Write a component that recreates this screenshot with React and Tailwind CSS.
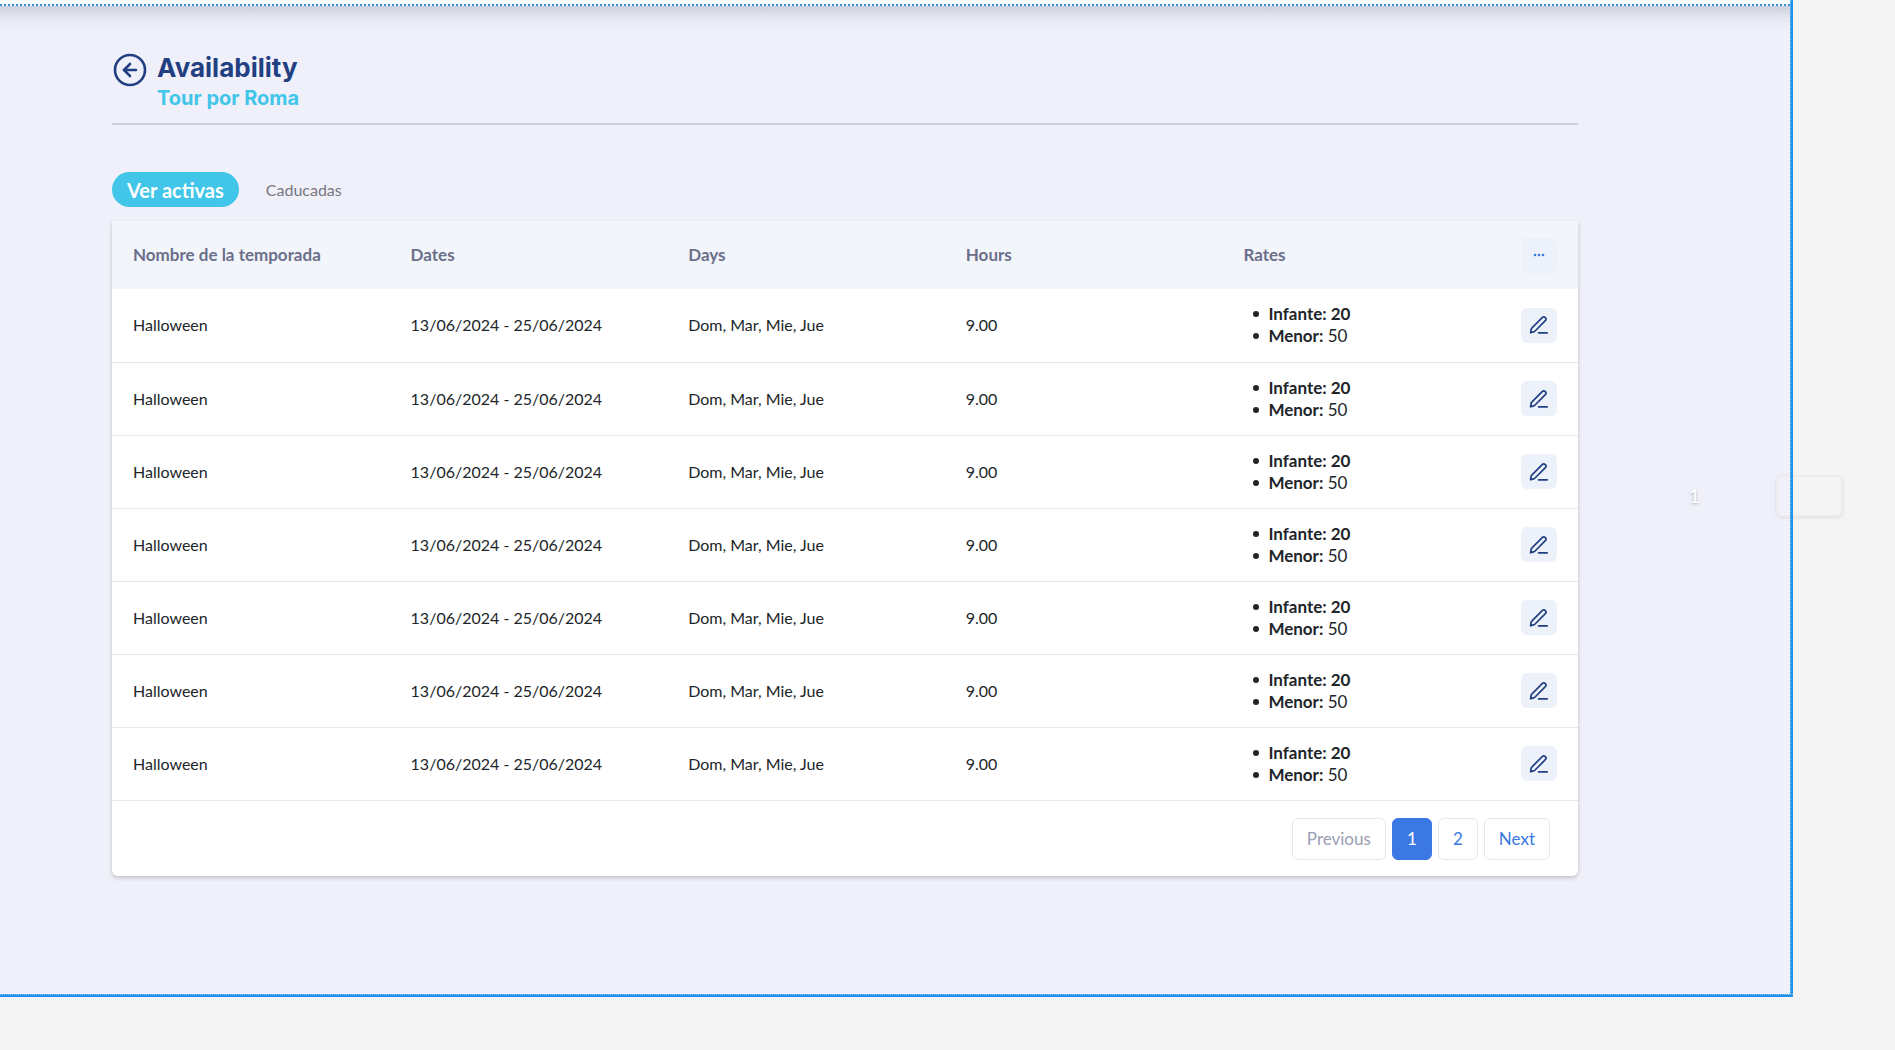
import React, { useState } from 'react';
import { CircleArrowLeft } from 'lucide-react';

const seasons = Array.from({ length: 7 }, (_, index) => ({
    id: index + 1,
    name: 'Halloween',
    dates: '13/06/2024 - 25/06/2024',
    days: 'Dom, Mar, Mie, Jue',
    hours: '9.00',
    infant: 20,
    minor: 50,
}));

const columns = ['Nombre de la temporada', 'Dates', 'Days', 'Hours', 'Rates'];

const PenIcon = () => (
    <svg width="20" height="20" viewBox="0 0 20 20" fill="none" stroke="currentColor" strokeWidth="1.7" strokeLinecap="round" strokeLinejoin="round" aria-hidden="true">
        <path d="M1.6 17.8l.5-3.3a3 3 0 0 1 .9-1.7L13.2 2.6a2.1 2.1 0 0 1 3.1 3.1L6.1 16a3 3 0 0 1-1.6.9z" />
        <path d="M9.6 17.8h8.6" />
    </svg>
);

const pageButton = 'h-[42px] rounded-md border px-[14px] text-[17px]';
const bullet = "flex items-center gap-[9px] before:size-[6px] before:rounded-full before:bg-[#212529] before:content-['']";

const App = () => {
    const [page, setPage] = useState(1);
    const [tab, setTab] = useState('active');

    const tabClass = (name) =>
        tab === name
            ? 'h-[35px] rounded-full bg-[#41c5e9] px-[15px] text-xl font-bold text-white'
            : 'h-[35px] px-[15px] text-base text-[#77777f]';

    return (
        <div className="min-h-screen bg-[#f4f4f4] font-['Lato',sans-serif] text-[#212529]">
            <div className="mr-[102px] flex">
                <main className="relative min-w-0 flex-1 bg-[#f0f0fa]">
                    <div className="h-1 bg-white"></div>
                    <div className="border-t-2 border-dotted border-[#2b95e6]"></div>
                    <div className="h-6 bg-linear-to-b from-[#ccd0dc] via-[#e6e7f1] to-[#f0f0fa]"></div>

                    <div className="mr-[212px] ml-28 pb-[118px]">
                        <header className="flex gap-2 border-b-2 border-[#cfcfdc] pt-5 pb-[13px]">
                            <a href="#back" aria-label="Back" className="pt-[2px] text-[#223f82]">
                                <CircleArrowLeft size={36} strokeWidth={1.75} />
                            </a>
                            <div className="pl-px font-['Inter',sans-serif] font-bold">
                                <h1 className="text-[26px] leading-9 text-[#223f82]">Availability</h1>
                                <h2 className="text-xl leading-6 text-[#41c5e9]">Tour por Roma</h2>
                            </div>
                        </header>

                        <div className="mt-[47px] mb-[14px] flex gap-3">
                            <button type="button" onClick={() => setTab('active')} className={tabClass('active')}>
                                Ver activas
                            </button>
                            <button type="button" onClick={() => setTab('expired')} className={tabClass('expired')}>
                                Caducadas
                            </button>
                        </div>

                        <section className="rounded-b-md bg-white shadow-[0_2px_4px_rgba(0,0,0,0.2)]">
                            <table className="w-full table-fixed text-left">
                                <thead>
                                    <tr className="h-[68px] bg-[#f2f5f9] text-[17px] text-[#6c6f8b]">
                                        {columns.map((column) => (
                                            <th key={column} className="px-[21px] font-bold">{column}</th>
                                        ))}
                                        <th className="w-[78px] px-[21px]">
                                            <button type="button" aria-label="More options" className="flex h-[35px] w-9 items-center justify-center rounded-md bg-[#edf1f9] text-[#3c78e3]">
                                                <svg width="12" height="4" viewBox="0 0 12 4" fill="currentColor" aria-hidden="true">
                                                    <circle cx="2" cy="2" r="1.3" />
                                                    <circle cx="6" cy="2" r="1.3" />
                                                    <circle cx="10" cy="2" r="1.3" />
                                                </svg>
                                            </button>
                                        </th>
                                    </tr>
                                </thead>
                                <tbody>
                                    {seasons.map((season) => (
                                        <tr key={season.id} className="h-[73px] border-b border-[#e6e7e9]">
                                            <td className="px-[21px]">{season.name}</td>
                                            <td className="px-[21px]">{season.dates}</td>
                                            <td className="px-[21px]">{season.days}</td>
                                            <td className="px-[21px]">{season.hours}</td>
                                            <td className="px-[21px]">
                                                <ul className="pl-[10px] text-[17px] leading-[22px]">
                                                    <li className={bullet}><b>Infante: {season.infant}</b></li>
                                                    <li className={bullet}><span><b>Menor:</b> {season.minor}</span></li>
                                                </ul>
                                            </td>
                                            <td className="px-[21px]">
                                                <button type="button" aria-label="Edit" className="flex h-[35px] w-9 items-center justify-center rounded-md bg-[#edf1f9] text-[#223f82]">
                                                    <PenIcon />
                                                </button>
                                            </td>
                                        </tr>
                                    ))}
                                </tbody>
                            </table>

                            <nav aria-label="Pages" className="flex justify-end gap-[6px] px-7 pt-[17px] pb-4">
                                <button type="button" disabled={page === 1} onClick={() => setPage(1)} className={`${pageButton} border-[#e6e7e9] text-[#3c78e3] disabled:text-[#9a9db3]`}>
                                    Previous
                                </button>
                                {[1, 2].map((number) => (
                                    <button
                                        key={number}
                                        type="button"
                                        onClick={() => setPage(number)}
                                        className={`${pageButton} w-10 ${page === number ? 'border-[#3c78e3] bg-[#3c78e3] text-white' : 'border-[#e6e7e9] text-[#3c78e3]'}`}
                                    >
                                        {number}
                                    </button>
                                ))}
                                <button type="button" onClick={() => setPage(2)} className={`${pageButton} border-[#e6e7e9] text-[#3c78e3]`}>
                                    Next
                                </button>
                            </nav>
                        </section>
                    </div>

                    <span className="absolute top-[481px] right-[90px] text-xl text-white [text-shadow:0_1px_3px_rgba(0,0,0,0.3)]">1</span>
                    <div className="absolute top-[475px] -right-[53px] h-[42px] w-[67px] rounded-md border-2 border-[#ececec] shadow-[0_1px_3px_rgba(0,0,0,0.1)]"></div>
                </main>
                <div className="relative z-10 w-[3px] border-l border-dotted border-[#8cc8f5] bg-[#1f93ec]"></div>
            </div>
            <div className="mr-[102px] h-[3px] border-t border-dotted border-[#8cc8f5] bg-[#1f93ec]"></div>
        </div>
    );
};

export default App;
